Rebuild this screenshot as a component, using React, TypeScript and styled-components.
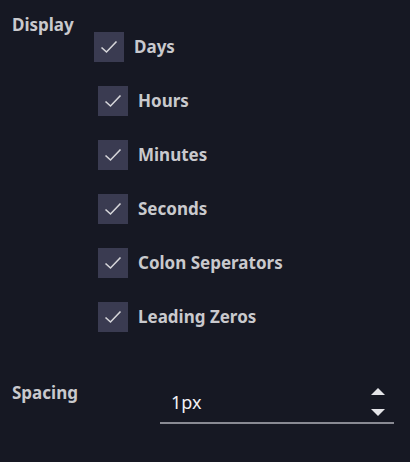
import React, { useState } from 'react';
import styled, { createGlobalStyle } from 'styled-components';

const GlobalStyle = createGlobalStyle`
  html, body {
    margin: 0;
    padding: 0;
    background: #161823;
  }
  body {
    font-family: "Noto Sans", "Open Sans", sans-serif;
  }
`;

const Panel = styled.div`
  width: 410px;
  height: 462px;
  box-sizing: border-box;
  padding: 14px 16px 0 12px;
  color: #c9c9cd;
`;

const Section = styled.div`
  display: flex;
  align-items: flex-start;
`;

const Label = styled.div<{ $width: number }>`
  width: ${p => p.$width}px;
  flex-shrink: 0;
  font-size: 17px;
  font-weight: 700;
  line-height: 22px;
`;

const List = styled.div`
  display: flex;
  flex-direction: column;
  gap: 24px;
  padding-top: 18px;
`;

const Item = styled.label<{ $indent: number }>`
  display: flex;
  align-items: center;
  gap: 10px;
  margin-left: ${p => p.$indent}px;
  cursor: pointer;
  font-size: 17px;
  font-weight: 700;
  line-height: 30px;
`;

const Box = styled.span`
  width: 30px;
  height: 30px;
  background: #3a3b51;
  display: flex;
  align-items: center;
  justify-content: center;
`;

const SpacingSection = styled(Section)`
  margin-top: 50px;
`;

const Field = styled.div`
  flex: 1;
  display: flex;
  align-items: center;
  border-bottom: 2px solid #898a93;
  height: 40px;
  padding: 0 9px 0 11px;
`;

const Value = styled.span`
  flex: 1;
  font-size: 18px;
  color: #f2f2f4;
  font-weight: 400;
`;

const Spinner = styled.div`
  display: flex;
  flex-direction: column;
  gap: 14px;
`;

const Arrow = styled.span<{ $up?: boolean }>`
  width: 0;
  height: 0;
  border-left: 7px solid transparent;
  border-right: 7px solid transparent;
  ${p => (p.$up ? 'border-bottom: 7px solid #e4e4e8;' : 'border-top: 7px solid #e4e4e8;')}
`;

const Check = () => (
  <svg width="18" height="14" viewBox="0 0 18 14">
    <path d="M1.5 7.5 L6.5 12 L16.5 1.5" fill="none" stroke="#d6d6da" strokeWidth="1.6" />
  </svg>
);

const options = ['Days', 'Hours', 'Minutes', 'Seconds', 'Colon Seperators', 'Leading Zeros'];

export default function App() {
  const [checked] = useState(options.map(() => true));

  return (
    <>
      <GlobalStyle />
      <Panel>
        <Section>
          <Label $width={82}>Display</Label>
          <List>
            {options.map((o, i) => (
              <Item key={o} $indent={i === 0 ? 0 : 4}>
                <Box>{checked[i] && <Check />}</Box>
                {o}
              </Item>
            ))}
          </List>
        </Section>
        <SpacingSection>
          <Label $width={148}>Spacing</Label>
          <Field>
            <Value>1px</Value>
            <Spinner>
              <Arrow $up />
              <Arrow />
            </Spinner>
          </Field>
        </SpacingSection>
      </Panel>
    </>
  );
}
